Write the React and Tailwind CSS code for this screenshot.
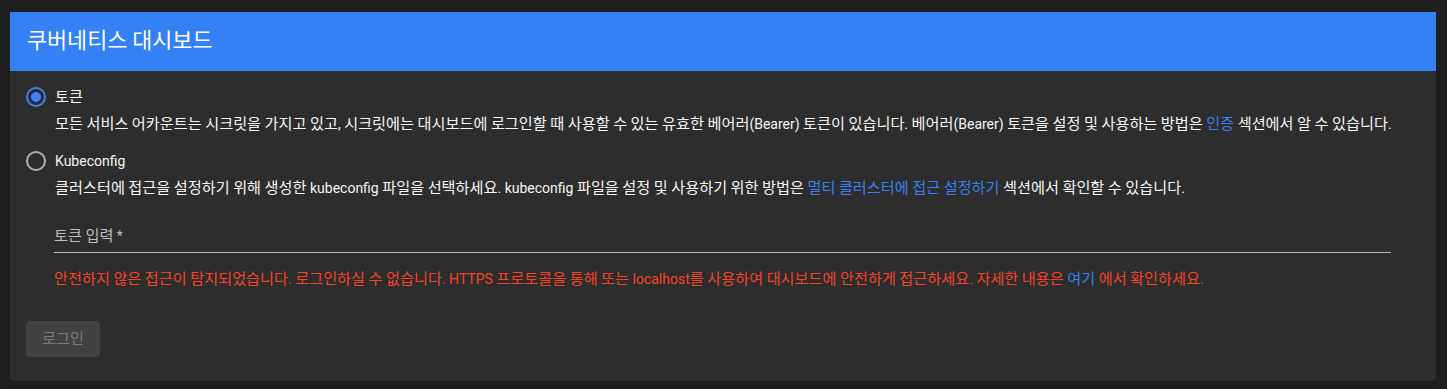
// Hangul in the reference renders wider than the Latin runs, so it gets its own size
function Ko({ text, size = 'text-[15.2px]' }) {
    const parts = text.split(/([\uAC00-\uD7A3\u3131-\u318E]+)/);
    return parts.map((p, i) =>
        /[\uAC00-\uD7A3\u3131-\u318E]/.test(p)
            ? <span key={i} className={size}>{p}</span>
            : p
    );
}

function Radio({ checked }) {
    return (
        <span className={`flex items-center justify-center w-[20px] h-[20px] rounded-full border-2 ${checked ? 'border-[#3b82f6]' : 'border-[#b0b0b0]'}`}>
            {checked && <span className="w-[10px] h-[10px] rounded-full bg-[#3b82f6]" />}
        </span>
    )
}

const link = 'text-[#3b7ff0]';

function App() {
    return (
        <div className="w-full h-[389px] bg-[#1f1f1f] pt-[12px] pl-[10px] pr-[11px] text-[14px] text-[#f5f5f5]" style={{ fontFamily: "Roboto, 'Noto Sans CJK KR', sans-serif" }}>
            <div className="flex flex-col h-[369px] bg-[#2d2d2d] rounded-b-[4px] shadow-md">
                <div className="flex items-center h-[59px] bg-[#3381f4] px-[17px] text-[20px] text-white">
                    <span><Ko text="쿠버네티스 대시보드" size="text-[21.8px]" /></span>
                </div>
                <div className="flex flex-col px-[16px] pt-[15px]">
                    <label className="flex items-center gap-[9px] h-[22px]">
                        <Radio checked />
                        <span><Ko text="토큰" /></span>
                    </label>
                    <p className="pl-[29px] mt-[6px] leading-[20px]">
                        <Ko text="모든 서비스 어카운트는 시크릿을 가지고 있고, 시크릿에는 대시보드에 로그인할 때 사용할 수 있는 유효한 베어러(Bearer) 토큰이 있습니다. 베어러(Bearer) 토큰을 설정 및 사용하는 방법은 " />
                        <span className={link}><Ko text="인증" /></span>
                        <Ko text=" 섹션에서 알 수 있습니다." />
                    </p>
                    <label className="flex items-center gap-[9px] h-[22px] mt-[16px]">
                        <Radio />
                        <span>Kubeconfig</span>
                    </label>
                    <p className="pl-[29px] mt-[6px] leading-[20px]">
                        <Ko text="클러스터에 접근을 설정하기 위해 생성한 kubeconfig 파일을 선택하세요. kubeconfig 파일을 설정 및 사용하기 위한 방법은 " />
                        <span className={link}><Ko text="멀티 클러스터에 접근 설정하기" /></span>
                        <Ko text=" 섹션에서 확인할 수 있습니다." />
                    </p>
                    <div className="ml-[28px] mr-[29px] mt-[28px] border-b border-[#bdbdbd] pb-[6px] leading-[20px] text-[#bdbdbd]">
                        <Ko text="토큰 입력 *" />
                    </div>
                    <p className="pl-[28px] mt-[16px] leading-[20px] text-[#f5432a]">
                        <Ko text="안전하지 않은 접근이 탐지되었습니다. 로그인하실 수 없습니다. HTTPS 프로토콜을 통해 또는 localhost를 사용하여 대시보드에 안전하게 접근하세요. 자세한 내용은 " />
                        <span className={link}><Ko text="여기" /></span>
                        <Ko text=" 에서 확인하세요." />
                    </p>
                    <div className="mt-[32px]">
                        <button className="w-[74px] h-[36px] rounded-[4px] bg-[#424242] text-[#7a7a7a] leading-[20px]"><Ko text="로그인" /></button>
                    </div>
                </div>
            </div>
        </div>
    )
}

export default App;
